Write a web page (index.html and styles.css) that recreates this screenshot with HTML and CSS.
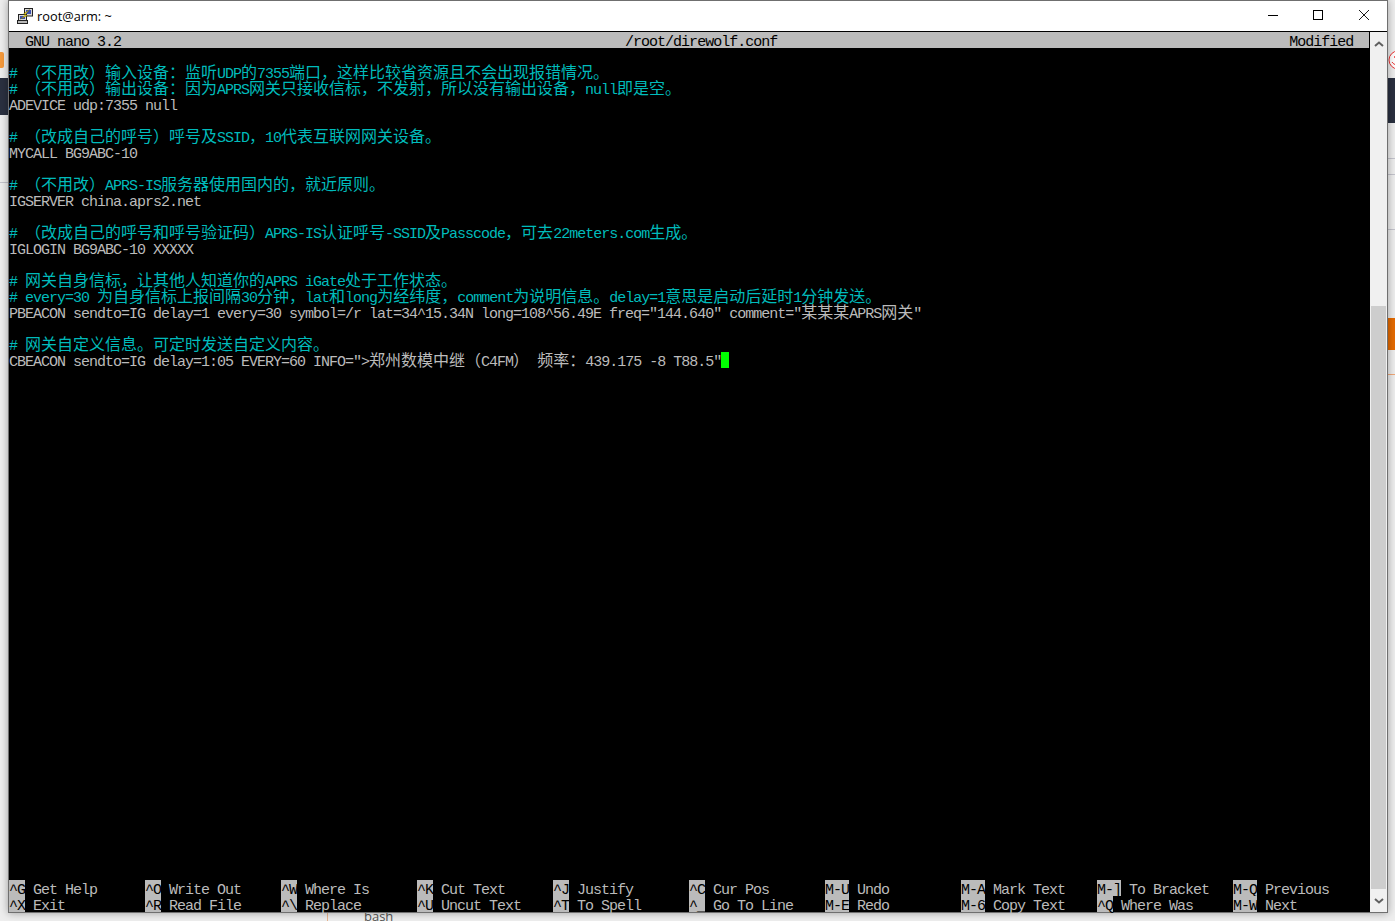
FILE: index.html
```html
<!DOCTYPE html>
<html lang="zh-CN">
<head>
<meta charset="utf-8">
<title>root@arm: ~</title>
<link rel="stylesheet" href="styles.css">
</head>
<body>
<div class="desk">
  <div class="bg-dark bg-dark-left"></div>
  <div class="bg-orange-left"></div>
  <div class="bg-line bg-line-left"></div>
  <div class="bg-dark bg-dark-right"></div>
  <svg class="bg-smile" viewBox="0 0 20 20" aria-hidden="true"><circle cx="10" cy="10" r="9" fill="#fff" stroke="#e33" stroke-width="1"/><circle cx="7" cy="7" r="1" fill="#e33"/><path d="M4 12c2 3 6 4 9 2" fill="none" stroke="#e33"/></svg>
  <div class="bg-line bg-line-r1"></div>
  <div class="bg-line bg-line-r2"></div>
  <div class="bg-line bg-line-r3"></div>
  <div class="bg-line bg-line-r4"></div>
  <div class="bg-orange-right"></div>
  <div class="bg-vline"></div>
  <div class="bg-bash">bash</div>

  <div class="window">
    <header class="titlebar">
      <svg class="app-icon" viewBox="0 0 16 16" aria-hidden="true">
        <rect x="7.5" y="0.5" width="8" height="7.5" fill="#d8d8d8" stroke="#222"/>
        <rect x="9" y="2" width="5" height="4" fill="#3a4fb0"/>
        <rect x="1.5" y="6.5" width="8" height="6" fill="#d8d8d8" stroke="#222"/>
        <rect x="3" y="8" width="5" height="3" fill="#3a4fb0"/>
        <rect x="0.5" y="12.5" width="10" height="3" fill="#b8b8b8" stroke="#222"/>
        <path d="M12.5 1.5 6.5 6 9 6.5 3.5 11 10.5 7.5 8 6.8Z" fill="#ffe81a" stroke="#6b5a00" stroke-width=".4"/>
      </svg>
      <span class="title">root@arm: ~</span>
      <div class="controls">
        <button class="ctl" aria-label="Minimize"><svg viewBox="0 0 10 10"><path d="M0 5.5h10" stroke="#000" fill="none"/></svg></button>
        <button class="ctl" aria-label="Maximize"><svg viewBox="0 0 10 10"><rect x=".5" y=".5" width="9" height="9" stroke="#000" fill="none"/></svg></button>
        <button class="ctl" aria-label="Close"><svg viewBox="0 0 10 10"><path d="M0 0l10 10M10 0 0 10" stroke="#000" stroke-width=".9" fill="none"/></svg></button>
      </div>
    </header>
    <div class="client">
      <main class="term">
        <div class="status">  GNU nano 3.2                                                               /root/direwolf.conf                                                                Modified  </div>
        <div class="editor">
          <div class="row c"># <span class="z">（不用改）输入设备：监听</span>UDP<span class="z">的</span>7355<span class="z">端口，这样比较省资源且不会出现报错情况。</span></div>
          <div class="row c"># <span class="z">（不用改）输出设备：因为</span>APRS<span class="z">网关只接收信标，不发射，所以没有输出设备，</span>null<span class="z">即是空。</span></div>
          <div class="row">ADEVICE udp:7355 null</div>
          <div class="row"></div>
          <div class="row c"># <span class="z">（改成自己的呼号）呼号及</span>SSID<span class="z">，</span>10<span class="z">代表互联网网关设备。</span></div>
          <div class="row">MYCALL BG9ABC-10</div>
          <div class="row"></div>
          <div class="row c"># <span class="z">（不用改）</span>APRS-IS<span class="z">服务器使用国内的，就近原则。</span></div>
          <div class="row">IGSERVER china.aprs2.net</div>
          <div class="row"></div>
          <div class="row c"># <span class="z">（改成自己的呼号和呼号验证码）</span>APRS-IS<span class="z">认证呼号</span>-SSID<span class="z">及</span>Passcode<span class="z">，可去</span>22meters.com<span class="z">生成。</span></div>
          <div class="row">IGLOGIN BG9ABC-10 XXXXX</div>
          <div class="row"></div>
          <div class="row c"># <span class="z">网关自身信标，让其他人知道你的</span>APRS iGate<span class="z">处于工作状态。</span></div>
          <div class="row c"># every=30 <span class="z">为自身信标上报间隔</span>30<span class="z">分钟，</span>lat<span class="z">和</span>long<span class="z">为经纬度，</span>comment<span class="z">为说明信息。</span>delay=1<span class="z">意思是启动后延时</span>1<span class="z">分钟发送。</span></div>
          <div class="row">PBEACON sendto=IG delay=1 every=30 symbol=/r lat=34^15.34N long=108^56.49E freq="144.640" comment="<span class="z">某某某</span>APRS<span class="z">网关</span>"</div>
          <div class="row"></div>
          <div class="row c"># <span class="z">网关自定义信息。可定时发送自定义内容。</span></div>
          <div class="row">CBEACON sendto=IG delay=1:05 EVERY=60 INFO="&gt;<span class="z">郑州数模中继（</span>C4FM<span class="z">）</span> <span class="z">频率：</span>439.175 -8 T88.5"<span class="cursor"></span></div>
        </div>
        <nav class="keys">
          <div class="sc"><span class="k">^G</span> Get Help</div>
          <div class="sc"><span class="k">^O</span> Write Out</div>
          <div class="sc"><span class="k">^W</span> Where Is</div>
          <div class="sc"><span class="k">^K</span> Cut Text</div>
          <div class="sc"><span class="k">^J</span> Justify</div>
          <div class="sc"><span class="k">^C</span> Cur Pos</div>
          <div class="sc"><span class="k">M-U</span> Undo</div>
          <div class="sc"><span class="k">M-A</span> Mark Text</div>
          <div class="sc"><span class="k">M-]</span> To Bracket</div>
          <div class="sc"><span class="k">M-Q</span> Previous</div>
          <div class="sc"><span class="k">^X</span> Exit</div>
          <div class="sc"><span class="k">^R</span> Read File</div>
          <div class="sc"><span class="k">^\</span> Replace</div>
          <div class="sc"><span class="k">^U</span> Uncut Text</div>
          <div class="sc"><span class="k">^T</span> To Spell</div>
          <div class="sc"><span class="k">^_</span> Go To Line</div>
          <div class="sc"><span class="k">M-E</span> Redo</div>
          <div class="sc"><span class="k">M-6</span> Copy Text</div>
          <div class="sc"><span class="k">^Q</span> Where Was</div>
          <div class="sc"><span class="k">M-W</span> Next</div>
        </nav>
      </main>
      <aside class="scrollbar">
        <div class="arrow"><svg viewBox="0 0 10 6"><path d="M1 5 5 1.5 9 5" fill="none" stroke="#606060" stroke-width="2"/></svg></div>
        <div class="track"><div class="thumb"></div></div>
        <div class="arrow"><svg viewBox="0 0 10 6"><path d="M1 1 5 4.5 9 1" fill="none" stroke="#606060" stroke-width="2"/></svg></div>
      </aside>
    </div>
  </div>
</div>
</body>
</html>
```
FILE: styles.css
```css
* { box-sizing: border-box; }
html, body { margin: 0; padding: 0; height: 100%; overflow: hidden; }
body { background: #efefef; }
.desk { position: relative; width: 1395px; height: 921px; overflow: hidden; background: #eeeeee; }

.bg-dark { position: absolute; background: #2a3040; }
.bg-dark-left { left: 0; top: 78px; width: 8px; height: 37px; }
.bg-dark-right { left: 1388px; top: 78px; width: 7px; height: 45px; }
.bg-orange-left { position: absolute; left: 0; top: 52px; width: 4px; height: 16px; background: #f59a3c; border-radius: 0 2px 2px 0; }
.bg-orange-right { position: absolute; left: 1388px; top: 318px; width: 7px; height: 32px; background: #e56a00; }
.bg-line { position: absolute; height: 1px; background: #c4c4cc; }
.bg-line-left { left: 0; top: 182px; width: 8px; }
.bg-line-r1 { left: 1388px; top: 158px; width: 7px; }
.bg-line-r2 { left: 1388px; top: 174px; width: 7px; }
.bg-line-r3 { left: 1388px; top: 229px; width: 7px; }
.bg-line-r4 { left: 1388px; top: 374px; width: 7px; background: #f0a878; }
.bg-smile { position: absolute; left: 1388px; top: 50px; width: 20px; height: 20px; }
.bg-vline { position: absolute; left: 327px; top: 913px; width: 1px; height: 8px; background: #e8b48c; }
.bg-bash { position: absolute; left: 364px; top: 909px; color: #555; font: 13px/14px "Open Sans", sans-serif; }

.window {
  position: absolute; left: 8px; top: 0; width: 1380px; height: 913px;
  display: flex; flex-direction: column;
  background: #fff; border: 1px solid #6f6f6f;
  box-shadow: 0 0 8px rgba(0, 0, 0, .35);
}
.titlebar { height: 31px; flex: none; display: flex; align-items: center; background: #fff; border-bottom: 1px solid #000; }
.app-icon { width: 16px; height: 16px; margin-left: 8px; flex: none; }
.title { margin-left: 4px; font: 12.8px/16px "Open Sans", sans-serif; color: #000; }
.controls { margin-left: auto; align-self: flex-start; display: flex; }
.ctl { width: 46px; height: 28px; padding: 0; border: 0; background: none; display: flex; align-items: center; justify-content: center; }
.ctl svg { width: 10px; height: 10px; display: block; }
.ctl:first-child svg { margin-left: 2px; }

.client { flex: 1; min-height: 0; display: flex; }
.term {
  width: 1361px; flex: none; background: #000; color: #bbb;
  display: flex; flex-direction: column;
  font: 15px/21px "Liberation Mono", monospace;
  letter-spacing: -1px;
}
.status { width: 1360px; height: 16px; background: #bbb; color: #000; overflow: hidden; white-space: pre; }
.editor { flex: 1; min-height: 0; padding-top: 16px; }
.row { height: 16px; white-space: pre; }
.c { color: #00bbbb; }
.z { font: 16px/0 "Noto Sans CJK SC", sans-serif; letter-spacing: 0; }
.cursor { display: inline-block; width: 8px; height: 16px; background: #00ff00; vertical-align: top; }
.keys { display: grid; grid-template-columns: repeat(10, 136px); grid-auto-rows: 16px; }
.sc { white-space: pre; }
.k { background: #bbb; color: #000; display: inline-block; height: 16px; }

.scrollbar { flex: 1; display: flex; flex-direction: column; background: #f0f0f0; }
.arrow { height: 23px; flex: none; display: flex; align-items: center; justify-content: center; }
.arrow svg { width: 10px; height: 6px; display: block; }
.track { flex: 1; min-height: 0; display: flex; flex-direction: column; justify-content: flex-end; padding: 0 1px; }
.thumb { height: 583px; background: #cdcdcd; }
```
